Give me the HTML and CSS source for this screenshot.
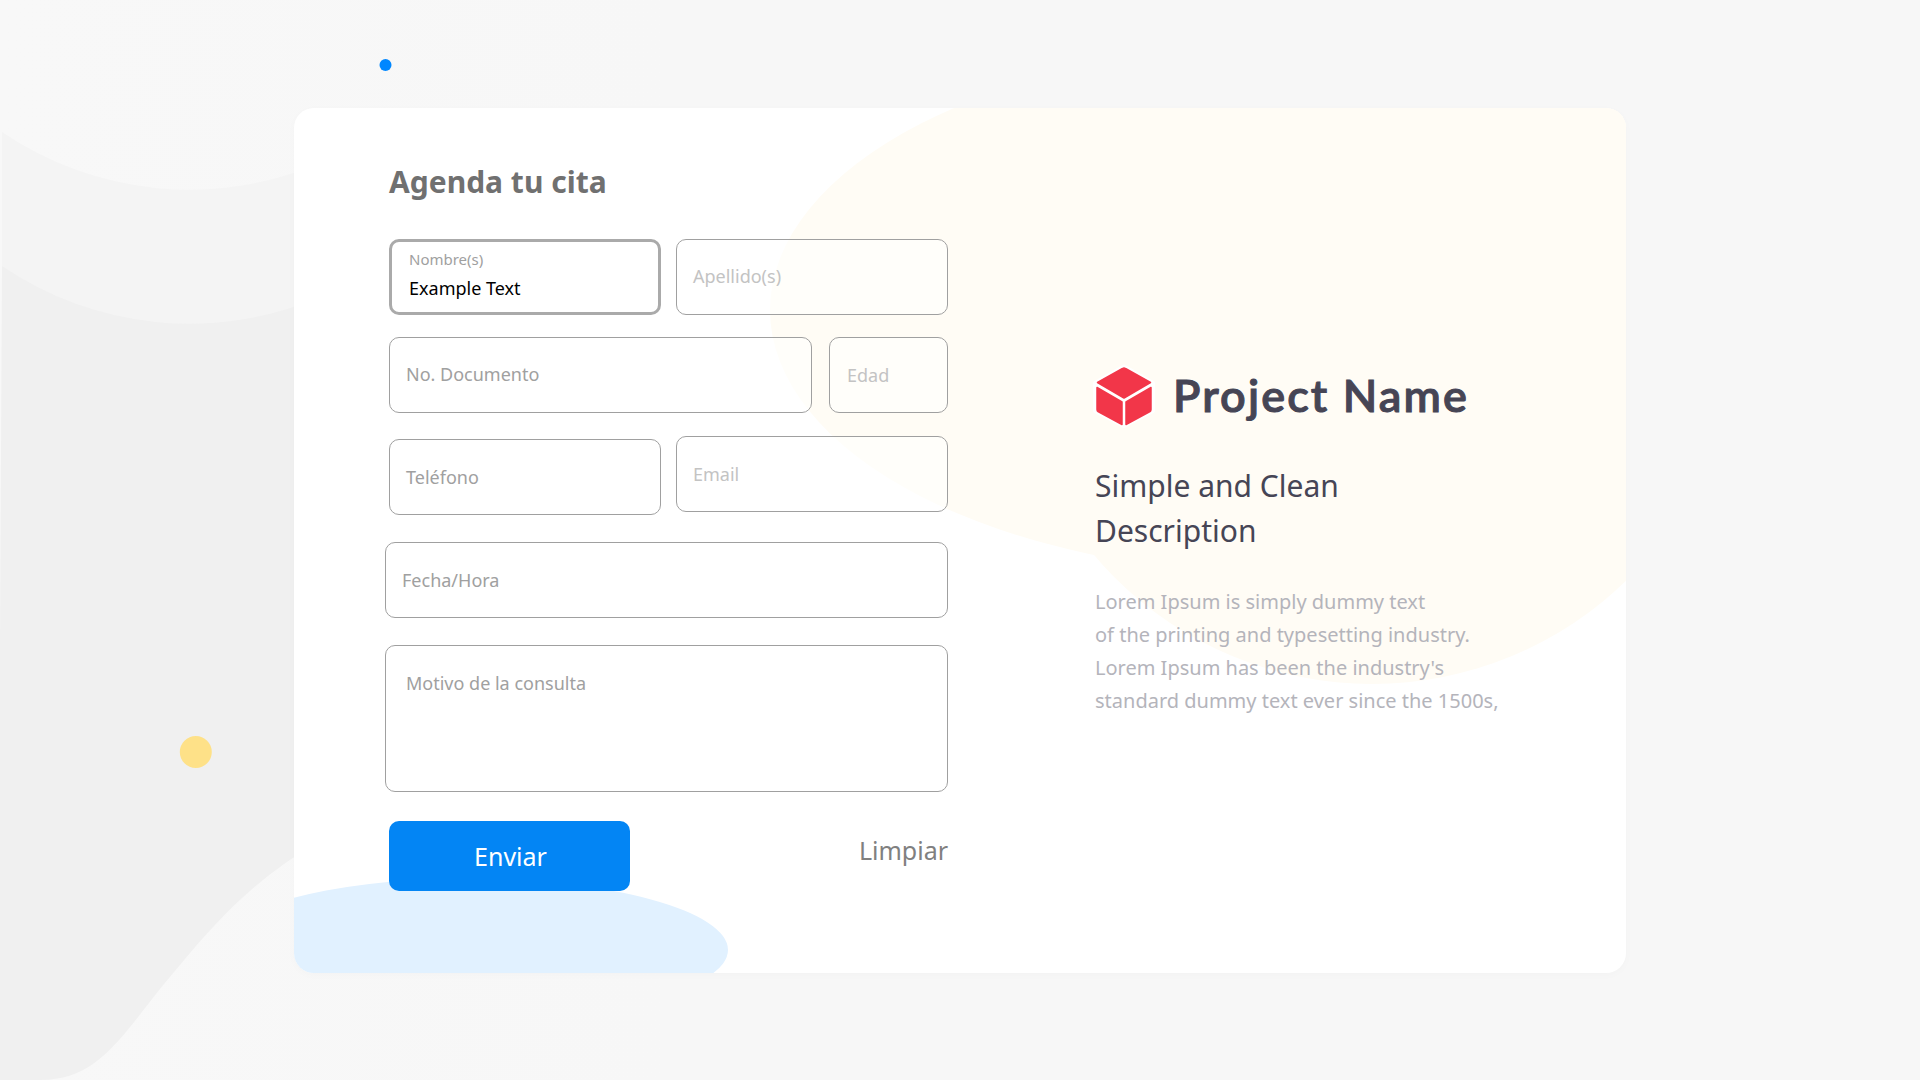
FILE: index.html
```html
<!DOCTYPE html>
<html lang="es">
<head>
<meta charset="utf-8">
<title>Agenda tu cita</title>
<link rel="stylesheet" href="styles.css">
</head>
<body>
<div class="page">
  <svg class="backdrop" viewBox="0 0 1920 1080" aria-hidden="true">
    <defs>
      <linearGradient id="wash" x1="0" x2="1"><stop offset="0" stop-color="#f8f8f8"/><stop offset=".35" stop-color="#f7f7f7"/></linearGradient>
    </defs>
    <rect width="1920" height="1080" fill="url(#wash)"/>
    <path fill="#f4f4f4" d="M2 132A333 333 0 0 0 320 163V400H2Z"/>
    <path fill="#f0f0f0" d="M2 266A333 333 0 0 0 320 297V841C240 887 200 942 160 989C118 1042 95 1080 40 1080H0V640Z"/>
    <circle cx="385.5" cy="65" r="6" fill="#0087ff"/>
    <circle cx="195.8" cy="752" r="16" fill="#fee188"/>
  </svg>
  <main class="card">
    <svg class="blobs" viewBox="0 0 1332 866" aria-hidden="true">
      <g fill="#fffcf5"><ellipse cx="993" cy="202" rx="517" ry="264"/><circle cx="1078" cy="212" r="364"/></g>
      <path fill="#e1f1ff" d="M-79 842A250 71.500 0 0 1 171 770.500A263 71.500 0 0 1 434 842A263 70 0 0 1 171 912A250 70 0 0 1 -79 842Z"/>
    </svg>
    <form class="form">
      <h1 class="title">Agenda tu cita</h1>
      <div class="row row-name">
        <div class="field field-active"><span class="caption">Nombre(s)</span><span class="value">Example Text</span></div>
        <div class="field field-soft">Apellido(s)</div>
      </div>
      <div class="row row-doc">
        <div class="field">No. Documento</div>
        <div class="field field-soft field-age">Edad</div>
      </div>
      <div class="row row-contact">
        <div class="field field-phone">Teléfono</div>
        <div class="field field-soft">Email</div>
      </div>
      <div class="field field-wide">Fecha/Hora</div>
      <div class="field field-wide field-area">Motivo de la consulta</div>
      <div class="actions">
        <button type="button" class="send">Enviar</button>
        <button type="reset" class="clear">Limpiar</button>
      </div>
    </form>
    <section class="about">
      <div class="brand">
        <svg class="cube" viewBox="0 0 62 64" aria-hidden="true">
          <path d="M31 2.5L60 19V47L31 62L2 47V19Z" fill="#fff" stroke="#fff" stroke-width="4" stroke-linejoin="round"/>
          <g fill="#f23649" stroke="#f23649" stroke-width="1.5" stroke-linejoin="round">
            <path d="M29.500 4.500Q31 3.500 32.500 4.500L57.500 18.500L31 34L4.500 18.500Z"/>
            <path d="M4 23.500L29 38V60.500L5 47.500Q4 47 4 45.500Z"/>
            <path d="M58 23.500L33 38V60.500L57 47.500Q58 47 58 45.500Z"/>
          </g>
        </svg>
        <span class="brand-name">Project Name</span>
      </div>
      <p class="tagline">Simple and Clean<br>Description</p>
      <p class="lorem">Lorem Ipsum is simply dummy text<br>of the printing and typesetting industry.<br>Lorem Ipsum has been the industry's<br>standard dummy text ever since the 1500s,</p>
    </section>
  </main>
</div>
</body>
</html>
```
FILE: styles.css
```css
* { box-sizing: border-box; }
body { margin: 0; font-family: "Noto Sans", sans-serif; }
.page { position: relative; width: 1920px; height: 1080px; padding: 108px 294px 106px; overflow: hidden; background: #f7f7f7; }
.backdrop { position: absolute; inset: 0; width: 1920px; height: 1080px; }
.card { position: relative; display: flex; height: 865px; border-radius: 20px; background: #fff; overflow: hidden; box-shadow: 0 2px 10px rgba(0, 0, 0, .02); }
.blobs { position: absolute; inset: 0; width: 1332px; height: 866px; }

.form { position: relative; width: 563px; margin-left: 91px; padding-top: 53px; }
.title { margin: 0 0 37px 4px; font-size: 30px; line-height: 41px; font-weight: 700; color: #707070; white-space: nowrap; }
.row { display: flex; gap: 15px; height: 76px; margin: 0 0 22px 4px; }
.row-doc { gap: 17px; margin-bottom: 23px; }
.row-contact { height: 79px; margin-bottom: 27px; }
.field { flex: 1 1 0; min-width: 0; display: flex; align-items: center; height: 76px; padding: 0 0 1px 16px; border: 1px solid #a0a0a0; border-radius: 10px; background: rgba(255, 255, 255, .5); font-size: 18px; line-height: 24px; color: #a0a0a0; white-space: nowrap; }
.field-soft { color: #c3c3c3; }
.row-name .field { flex: 0 0 272px; padding-bottom: 3px; }
.row-doc .field:first-child { padding-bottom: 3px; }
.row-name .field-active { flex-direction: column; align-items: flex-start; padding: 5px 0 0 17px; border: 3px solid #aaa; background: #fff; }
.caption { font-size: 15px; line-height: 24px; }
.value { margin-top: 5px; color: #000; }
.row-doc .field-age { flex: 0 0 119px; padding: 0 0 0 17px; }
.field-phone { margin-top: 3px; }
.field-wide { margin-bottom: 27px; }
.field-area { height: 147px; align-items: flex-start; padding: 25px 0 0 20px; }
.actions { display: flex; justify-content: space-between; align-items: flex-start; margin: 29px 0 0 4px; }
.send, .clear { margin: 0; padding: 0; border: 0; font: 400 25px/34px "Noto Sans", sans-serif; }
.send { width: 241px; height: 70px; padding-left: 2px; border-radius: 10px; background: #0385f4; color: #fff; }
.clear { margin-top: 12px; background: none; color: #808080; }

.about { position: relative; margin-left: 147px; padding-top: 256px; }
.brand { display: flex; align-items: center; gap: 18px; height: 64px; margin-left: -2px; }
.cube { width: 62px; height: 64px; }
.brand-name { margin-top: -2px; font: 600 45px/60px Lato, sans-serif; color: #464555; -webkit-text-stroke: 1px #464555; letter-spacing: 2.1px; white-space: nowrap; }
.tagline { margin: 35px 0 0; font-size: 30px; line-height: 45px; color: #464555; }
.lorem { margin: 32px 0 0; font-size: 20px; line-height: 33px; color: #b4b4bb; white-space: nowrap; }
```
